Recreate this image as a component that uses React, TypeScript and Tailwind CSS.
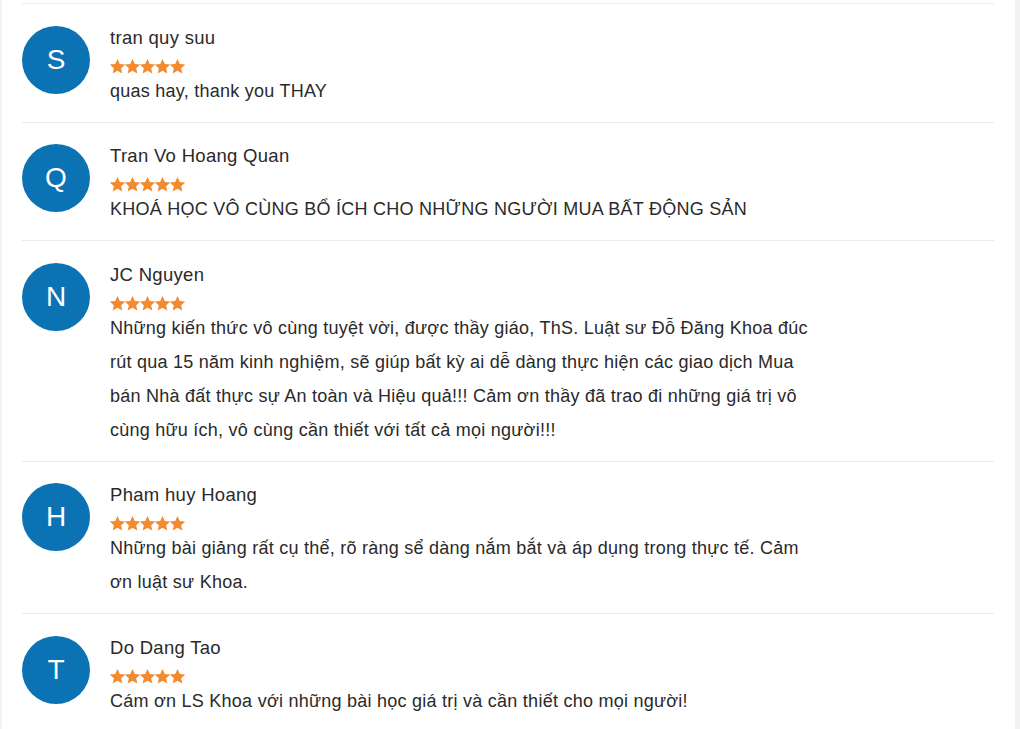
import React from "react";

interface IReview {
  name: string;
  initial: string;
  comment: string;
}

const reviews: IReview[] = [
  { name: "tran quy suu", initial: "S", comment: "quas hay, thank you THAY" },
  {
    name: "Tran Vo Hoang Quan",
    initial: "Q",
    comment: "KHOÁ HỌC VÔ CÙNG BỔ ÍCH CHO NHỮNG NGƯỜI MUA BẤT ĐỘNG SẢN",
  },
  {
    name: "JC Nguyen",
    initial: "N",
    comment:
      "Những kiến thức vô cùng tuyệt vời, được thầy giáo, ThS. Luật sư Đỗ Đăng Khoa đúc rút qua 15 năm kinh nghiệm, sẽ giúp bất kỳ ai dễ dàng thực hiện các giao dịch Mua bán Nhà đất thực sự An toàn và Hiệu quả!!! Cảm ơn thầy đã trao đi những giá trị vô cùng hữu ích, vô cùng cần thiết với tất cả mọi người!!!",
  },
  {
    name: "Pham huy Hoang",
    initial: "H",
    comment:
      "Những bài giảng rất cụ thể, rõ ràng sể dàng nắm bắt và áp dụng trong thực tế. Cảm ơn luật sư Khoa.",
  },
  {
    name: "Do Dang Tao",
    initial: "T",
    comment: "Cám ơn LS Khoa với những bài học giá trị và cần thiết cho mọi người!",
  },
];

function Star() {
  return (
    <svg width="15" height="15" viewBox="0.5 0.5 23 23" className="shrink-0">
      <path
        fill="#f28b30"
        d="M12 0.5l3.5 7.6 8.3.9-6.2 5.6 1.8 8.2L12 18.6l-7.4 4.2 1.8-8.2L.2 9l8.3-.9z"
      />
    </svg>
  );
}

function ReviewItem({ review }: { review: IReview }) {
  return (
    <div className="flex gap-[20px] border-t border-[#ebebeb] pt-[21.5px] pb-[14px]">
      <div className="flex h-[68px] w-[68px] shrink-0 items-center justify-center rounded-full bg-[#0b72b4] text-[28px] text-white">
        {review.initial}
      </div>
      <div className="flex flex-col">
        <p className="text-[18.5px] leading-[24px] tracking-[0.3px] text-[#2a2a2a]">
          {review.name}
        </p>
        <div className="mt-[9px] flex h-[15px]">
          {[0, 1, 2, 3, 4].map((i) => (
            <Star key={i} />
          ))}
        </div>
        <p className="max-w-[702px] text-[18px] leading-[34px] tracking-[0.25px] text-[#2a2a2a]">
          {review.comment}
        </p>
      </div>
    </div>
  );
}

export default function App() {
  return (
    <div
      className="flex h-[729px] w-full overflow-hidden bg-white"
      style={{ fontFamily: "'Liberation Sans', Arial, sans-serif" }}
    >
      <div className="w-[2px] shrink-0 bg-[#f3f3f3]" />
      <div className="flex-1 pt-[3px] pl-[20px] pr-[21px]">
        {reviews.map((r) => (
          <ReviewItem key={r.name} review={r} />
        ))}
      </div>
      <div className="w-[5px] shrink-0 bg-[#f1f1f1]" />
    </div>
  );
}
